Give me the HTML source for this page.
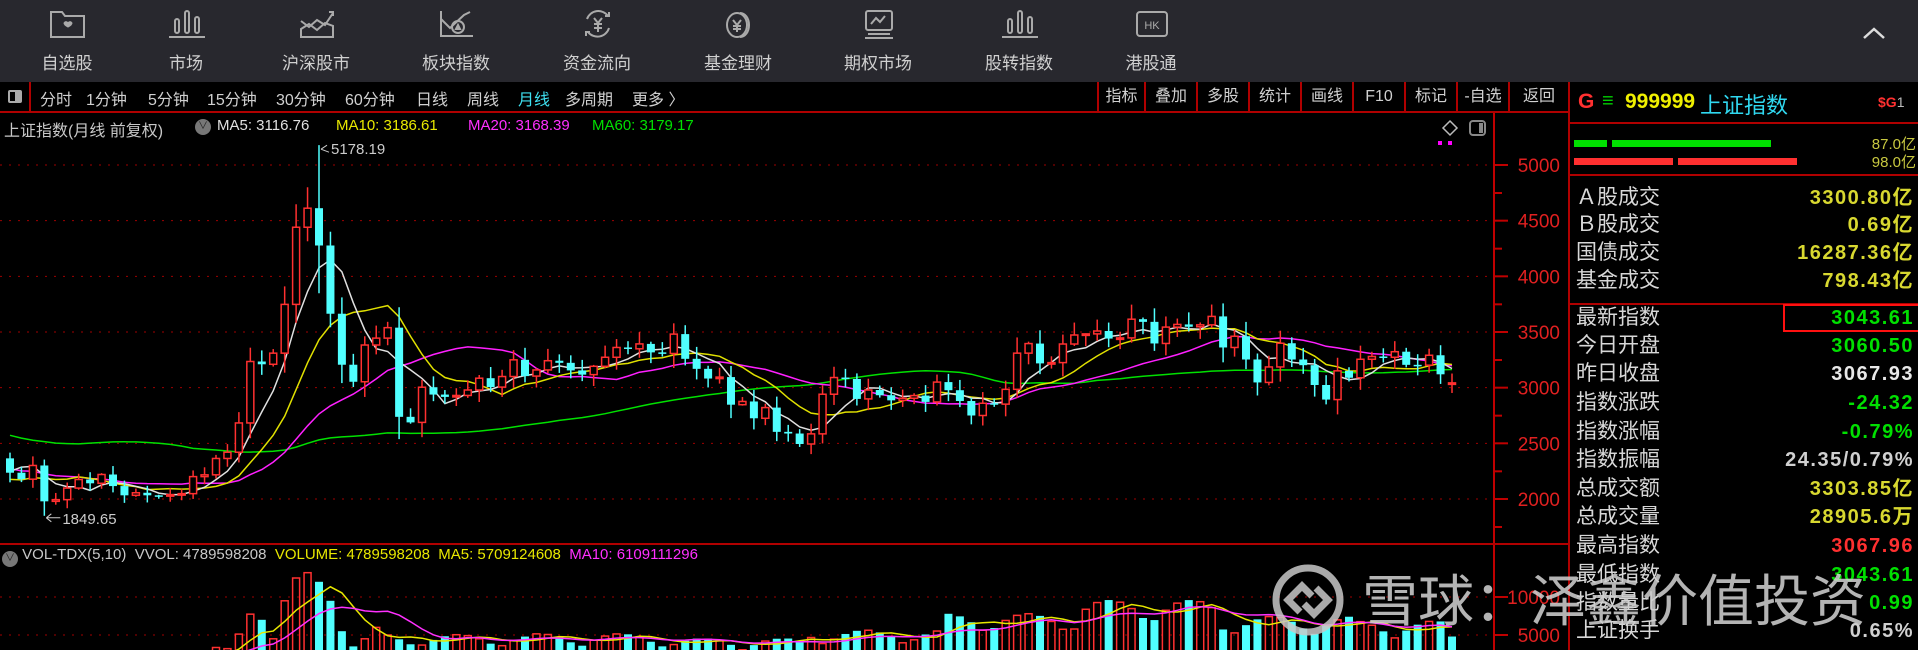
<!DOCTYPE html>
<html><head><meta charset="utf-8">
<style>
*{margin:0;padding:0;box-sizing:border-box}
body{width:1918px;height:650px;background:#000;overflow:hidden;position:relative;font-family:"Liberation Sans","Noto Sans CJK SC",sans-serif;color:#ccc}
#nav{position:absolute;left:0;top:0;width:1918px;height:82px;background:#28282e}
.ni{position:absolute;top:0;width:120px;text-align:center}
.ni svg{position:absolute;left:42px;top:9px}
.ni span{position:absolute;top:49px;left:0;width:120px;font-size:17px;color:#d0d0d0}
#tb{position:absolute;left:0;top:82px;width:1568px;height:31px;border-bottom:2px solid #b00000;background:#000}
.ti{position:absolute;top:4px;font-size:16px;color:#d0d0d0;white-space:nowrap}
.rb{position:absolute;top:0;height:29px;border-left:2px solid #b00000;font-size:16px;color:#d0d0d0;text-align:center;line-height:29px}
#rp{position:absolute;left:1568px;top:82px;width:350px;height:568px;border-left:2px solid #b00000}
.lb{position:absolute;left:6px;font-size:21px;color:#d8d8d8;white-space:nowrap;line-height:26px}
.vl{position:absolute;right:4px;font-size:20px;font-weight:bold;white-space:nowrap;line-height:26px;letter-spacing:1.5px}
.info{position:absolute;top:117px;font-size:15px;white-space:nowrap}
</style></head><body>
<div id="nav">
 <div class="ni" style="left:7px"><svg width="38" height="30" viewBox="0 0 38 30" fill="none" stroke="#aaa" stroke-width="2"><path d="M2 3h11l3 4h19v21H2z"/><path d="M15 14c2-3 4 0 4 0s2-3 4 0c0 2-4 4-4 4s-4-2-4-4z" fill="#aaa" stroke-width="1"/></svg><span>自选股</span></div>
 <div class="ni" style="left:126px"><svg width="38" height="30" viewBox="0 0 38 30" fill="none" stroke="#aaa" stroke-width="2"><rect x="7" y="10" width="4" height="14" rx="2"/><rect x="17" y="2" width="4" height="22" rx="2"/><rect x="27" y="8" width="4" height="16" rx="2"/><path d="M1 28h36"/></svg><span>市场</span></div>
 <div class="ni" style="left:256px"><svg width="38" height="30" viewBox="0 0 38 30" fill="none" stroke="#aaa" stroke-width="2"><path d="M3 12l8 6 8-7 8 5 8-12"/><path d="M31 3h4v4"/><path d="M3 20l8-5 8 6 8-7 8 3v11H3z"/></svg><span>沪深股市</span></div>
 <div class="ni" style="left:396px"><svg width="38" height="30" viewBox="0 0 38 30" fill="none" stroke="#aaa" stroke-width="2"><path d="M3 2v25h32"/><path d="M3 10l9 9 14-13 6-3"/><circle cx="20" cy="18" r="6"/><path d="M18 20l2-4 2 4z" fill="#aaa"/></svg><span>板块指数</span></div>
 <div class="ni" style="left:537px"><svg width="38" height="30" viewBox="0 0 38 30" fill="none" stroke="#aaa" stroke-width="2"><path d="M8 10a12 12 0 0 1 21-3"/><path d="M30 19a12 12 0 0 1-21 4"/><path d="M26 7h4V3M11 23H7v4"/><path d="M15 9l4 5 4-5M19 14v9M15 15h8M15 19h8"/></svg><span>资金流向</span></div>
 <div class="ni" style="left:678px"><svg width="38" height="30" viewBox="0 0 38 30" fill="none" stroke="#aaa" stroke-width="2"><ellipse cx="17" cy="16" rx="10" ry="12"/><path d="M20 4c5 0 9 5 9 12s-4 12-9 12"/><path d="M13 11l4 5 4-5M17 16v7M13 17h8M13 20h8"/></svg><span>基金理财</span></div>
 <div class="ni" style="left:818px"><svg width="38" height="30" viewBox="0 0 38 30" fill="none" stroke="#aaa" stroke-width="2"><rect x="6" y="2" width="26" height="19" rx="2"/><path d="M11 15l5-6 4 4 5-6"/><path d="M8 25h22M5 29h28"/></svg><span>期权市场</span></div>
 <div class="ni" style="left:959px"><svg width="38" height="30" viewBox="0 0 38 30" fill="none" stroke="#aaa" stroke-width="2"><rect x="7" y="10" width="4" height="14" rx="2"/><rect x="17" y="2" width="4" height="22" rx="2"/><rect x="27" y="8" width="4" height="16" rx="2"/><path d="M1 28h36"/></svg><span>股转指数</span></div>
 <div class="ni" style="left:1091px"><svg width="38" height="30" viewBox="0 0 38 30" fill="none" stroke="#aaa" stroke-width="2"><rect x="4" y="3" width="30" height="24" rx="3"/><text x="19" y="20" font-size="11" fill="#aaa" stroke="none" text-anchor="middle" font-family="Liberation Sans">HK</text></svg><span>港股通</span></div>
 <svg style="position:absolute;left:1862px;top:26px" width="24" height="14" viewBox="0 0 24 14"><path d="M2 12L12 3l10 9" fill="none" stroke="#ddd" stroke-width="2.5"/></svg>
</div>
<div id="tb">
 <div style="position:absolute;left:0;top:0;width:31px;height:29px;border-right:2px solid #b00000"><div style="position:absolute;left:8px;top:8px;width:14px;height:13px;border:2px solid #aaa;border-radius:2px"><div style="position:absolute;right:0;top:0;width:5px;height:9px;background:#aaa"></div></div></div>
 <span class="ti" style="left:40px">分时</span><span class="ti" style="left:86px">1分钟</span><span class="ti" style="left:148px">5分钟</span><span class="ti" style="left:207px">15分钟</span><span class="ti" style="left:276px">30分钟</span><span class="ti" style="left:345px">60分钟</span><span class="ti" style="left:416px">日线</span><span class="ti" style="left:467px">周线</span><span class="ti" style="left:518px;color:#3ee0f0">月线</span><span class="ti" style="left:565px">多周期</span><span class="ti" style="left:632px">更多 〉</span>
 <div class="rb" style="left:1097px;width:47px">指标</div><div class="rb" style="left:1144px;width:52px">叠加</div><div class="rb" style="left:1196px;width:52px">多股</div><div class="rb" style="left:1248px;width:52px">统计</div><div class="rb" style="left:1300px;width:52px">画线</div><div class="rb" style="left:1352px;width:52px">F10</div><div class="rb" style="left:1404px;width:52px">标记</div><div class="rb" style="left:1456px;width:52px">-自选</div><div class="rb" style="left:1508px;width:60px">返回</div>
</div>
<div class="info" style="left:4px;color:#c8c8c8;font-size:16px">上证指数(月线 前复权)</div>
<div style="position:absolute;left:195px;top:119px;width:16px;height:16px;border-radius:50%;background:#777;color:#222;font-size:10px;text-align:center;line-height:16px">∨</div>
<div class="info" style="left:217px;color:#e0e0e0">MA5: 3116.76</div>
<div class="info" style="left:336px;color:#e8e800">MA10: 3186.61</div>
<div class="info" style="left:468px;color:#ff30ff">MA20: 3168.39</div>
<div class="info" style="left:592px;color:#00e000">MA60: 3179.17</div>
<div class="info" style="left:2px;top:546px;color:#c8c8c8;font-size:15px"><span style="display:inline-block;width:16px;height:16px;border-radius:50%;background:#777;color:#222;font-size:10px;text-align:center;line-height:16px;vertical-align:-2px">∨</span> VOL-TDX(5,10) &nbsp;VVOL: 4789598208 &nbsp;<span style="color:#e8e800">VOLUME: 4789598208 &nbsp;MA5: 5709124608</span> &nbsp;<span style="color:#ff30ff">MA10: 6109111296</span></div>
<svg id="ch" style="position:absolute;left:0;top:0" width="1568" height="650"></svg>
<div id="rp">
 <div style="position:absolute;left:0;top:0;width:350px;height:42px;border-bottom:2px solid #b00000">
  <span style="position:absolute;left:8px;top:8px;font-size:21px;font-weight:bold;color:#ff3030">G</span>
  <span style="position:absolute;left:32px;top:8px;font-size:20px;color:#00d000">≡</span>
  <span style="position:absolute;left:55px;top:8px;font-size:21px;font-weight:bold;color:#f0f000">999999</span>
  <span style="position:absolute;left:130px;top:6px;font-size:22px;color:#30d8f0">上证指数</span>
  <span style="position:absolute;left:308px;top:12px;font-size:14px;font-weight:bold;color:#ff3030">$G<span style="color:#bbb;font-weight:normal">1</span></span>
 </div>
 <div style="position:absolute;left:4px;top:58px;width:33px;height:7px;background:#00e000"></div>
 <div style="position:absolute;left:42px;top:58px;width:159px;height:7px;background:#00e000"></div>
 <div style="position:absolute;left:4px;top:76px;width:99px;height:7px;background:#ff3030"></div>
 <div style="position:absolute;left:108px;top:76px;width:119px;height:7px;background:#ff3030"></div>
 <span style="position:absolute;right:2px;top:51px;font-size:15px;color:#c8c840">87.0亿</span>
 <span style="position:absolute;right:2px;top:69px;font-size:15px;color:#c8c840">98.0亿</span>
 <div style="position:absolute;left:0;top:92px;width:350px;height:2px;background:#b00000"></div>
 <div style="position:absolute;left:0;top:221px;width:350px;height:2px;background:#b00000"></div>
 <div style="position:absolute;left:213px;top:222px;width:137px;height:28px;border:2px solid #ff1010"></div>
 <div id="rows"></div>
</div>
<svg style="position:absolute;left:0;top:0" width="1918" height="650">
 <g fill="none" stroke="rgba(200,200,200,0.85)" stroke-width="7">
  <circle cx="1308" cy="600" r="32"/>
  <path d="M1300 612l-12-12 14-14 10 10"/>
  <path d="M1316 588l12 12-14 14-10-10"/>
 </g>
 <text x="1362" y="621" font-size="56" fill="rgba(205,205,205,0.88)" font-family="Noto Sans CJK SC,sans-serif">雪球：泽鑫价值投资</text>
</svg>
<script>
var pre=[3473,3693,3433,2736,2775,2397,2293,1728,1871,1821,1990,2082,2373,2477,2632,2959,3412,2667,2779,2995,3195,3277,2989,3051,3109,2870,2592,2398,2638,2638,2655,2978,2820,2808,2790,2905,2928,2911,2743,2762,2701,2567,2359,2468,2333,2199,2292,2428,2262,2396,2372,2225,2103,2047,2086,2068,1980,2269,2385,2365];
var d=[2236,2178,2301,1979,1994,2098,2175,2141,2220,2116,
2033,2056,2033,2026,2039,2048,2201,2217,2364,2420,2683,3235,
3210,3310,3748,4441,4612,4277,3664,3206,3053,3383,3445,3539,
2738,2688,3004,2938,2917,2930,2979,3085,3005,3100,3250,3104,
3159,3242,3223,3155,3117,3192,3273,3361,3349,3393,3317,3307,
3481,3259,3169,3082,3095,2847,2876,2725,2821,2603,2588,2494,
2585,2941,3091,3078,2899,2979,2932,2886,2905,2929,2872,3050,
2977,2880,2750,2860,2852,2985,3310,3396,3218,3225,3392,3473,
3483,3509,3441,3447,3615,3591,3397,3544,3568,3547,3564,3640,
3361,3462,3253,3047,3186,3399,3253,3202,3024,2893,3151,3089,
3255,3280,3273,3323,3205,3202,3291,3120,3043];
var all=pre.concat(d);var N=d.length;
function X(i){return 10+i*(1442/(N-1));}
function Y(p){return 165+(5000-p)*0.11133;}
function VY(v){return 673-v*38/5000;}
var s='',R='#ff3030',C='#50ffff';
[5000,4500,4000,3500,3000,2500,2000].forEach(function(p){var y=Y(p);s+='<line x1="0" y1="'+y+'" x2="1492" y2="'+y+'" stroke="#a00000" stroke-dasharray="2,7"/><line x1="1495" y1="'+y+'" x2="1508" y2="'+y+'" stroke="#c00000" stroke-width="2"/><text x="1560" y="'+(y+7)+'" fill="#e02020" font-size="19" text-anchor="end" font-family="Liberation Sans">'+p+'</text>';
 s+='<line x1="1495" y1="'+(y+28)+'" x2="1502" y2="'+(y+28)+'" stroke="#c00000" stroke-width="2"/>';});
[[10000,597],[5000,635]].forEach(function(a){s+='<line x1="0" y1="'+a[1]+'" x2="1492" y2="'+a[1]+'" stroke="#a00000" stroke-dasharray="2,7"/><line x1="1495" y1="'+a[1]+'" x2="1508" y2="'+a[1]+'" stroke="#c00000" stroke-width="2"/><text x="1560" y="'+(a[1]+7)+'" fill="#e02020" font-size="19" text-anchor="end" font-family="Liberation Sans">'+a[0]+'</text>';});
s+='<line x1="1494" y1="113" x2="1494" y2="650" stroke="#c00000" stroke-width="2"/><line x1="0" y1="544" x2="1568" y2="544" stroke="#b00000" stroke-width="2"/>';
var vol=[];
for(var i=0;i<N;i++){var v;
 var r=0.8+0.4*Math.abs(Math.sin(i*2.7));
 if(i<18)v=1800;else if(i<20)v=2800;else if(i<21)v=5000;else if(i<22)v=9000;
 else if(i<34)v=[7000,4500,9500,12500,13200,12000,9500,5500,3500,4500,6000,5000][i-22]*1.0;
 else if(i<46)v=4200;else if(i<58)v=4300;else if(i<70)v=3800;else if(i<82)v=4700;else if(i<94)v=6500;else if(i<106)v=8000;else if(i<118)v=6200;else v=5700;
 if(i>=22&&i<34)r=1;vol.push(v*r);}
vol[N-1]=4800;
var vs='';
for(var i=0;i<N;i++){var c=d[i],o=all[59+i];var x=X(i),y=VY(vol[i]);if(c>=o)vs+='<rect x="'+(x-3.5)+'" y="'+y+'" width="7" height="'+(673-y)+'" fill="none" stroke="'+R+'" stroke-width="1.5"/>';else vs+='<rect x="'+(x-4)+'" y="'+y+'" width="8" height="'+(673-y)+'" fill="'+C+'"/>';}
function vma(n){var p='';for(var i=0;i<N;i++){var a=0,k=0;for(var j=Math.max(0,i-n+1);j<=i;j++){a+=vol[j];k++;}p+=(i?'L':'M')+X(i).toFixed(1)+' '+VY(a/k).toFixed(1);}return p;}
vs+='<path d="'+vma(5)+'" fill="none" stroke="#e8e800" stroke-width="1.5"/><path d="'+vma(10)+'" fill="none" stroke="#ff30ff" stroke-width="1.5"/>';
s+='<clipPath id="vc"><rect x="0" y="562" width="1492" height="90"/></clipPath><g clip-path="url(#vc)">'+vs+'</g>';
function ma(n,col){var p='';for(var i=0;i<N;i++){var a=0;for(var j=0;j<n;j++)a+=all[60+i-j];p+=(i?'L':'M')+X(i).toFixed(1)+' '+Y(a/n).toFixed(1);}return '<path d="'+p+'" fill="none" stroke="'+col+'" stroke-width="1.5"/>';}
var cs=ma(60,'#00e000')+ma(20,'#ff20ff')+ma(10,'#e0e000')+ma(5,'#e0e0e0');
for(var i=0;i<N;i++){var c=d[i],o=all[59+i];if(i==N-1)o=3036;
 var r=Math.abs(Math.sin(i*1.9+0.5));var hi=Math.max(o,c)+Math.abs(c-o)*0.15+c*0.03*r,lo=Math.min(o,c)-Math.abs(c-o)*0.15-c*0.03*Math.abs(Math.cos(i*1.3));
 if(i==27){hi=5178;lo=3848;} if(i==3){lo=1849;} if(i==26)hi=4800;
 var x=X(i);var col=c>=o?R:C;
 cs+='<line x1="'+x+'" y1="'+Y(hi)+'" x2="'+x+'" y2="'+Y(lo)+'" stroke="'+col+'" stroke-width="1.5"/>';
 var t=Y(Math.max(o,c)),b=Y(Math.min(o,c));if(b-t<1.5)b=t+1.5;
 if(c>=o)cs+='<rect x="'+(x-3.5)+'" y="'+t+'" width="7" height="'+(b-t)+'" fill="#000" stroke="'+R+'" stroke-width="1.5"/>';
 else cs+='<rect x="'+(x-4)+'" y="'+t+'" width="8" height="'+(b-t)+'" fill="'+C+'"/>';}
s+='<clipPath id="mc"><rect x="0" y="140" width="1492" height="402"/></clipPath><g clip-path="url(#mc)">'+cs+'</g>';
var px=X(27),lx=X(3);
s+='<path d="M'+(px+2)+' '+(Y(5178)+4)+'l6 -4M'+(px+2)+' '+(Y(5178)+4)+'l8 3" stroke="#ccc" fill="none"/><text x="'+(px+12)+'" y="'+(Y(5178)+9)+'" fill="#ccc" font-size="15" font-family="Liberation Sans">5178.19</text>';
s+='<path d="M'+(lx+2)+' '+(Y(1849)+2)+'l5 -4M'+(lx+2)+' '+(Y(1849)+2)+'l5 4M'+(lx+2)+' '+(Y(1849)+2)+'h14" stroke="#ccc" fill="none"/><text x="'+(lx+18)+'" y="'+(Y(1849)+8)+'" fill="#ccc" font-size="15" font-family="Liberation Sans">1849.65</text>';
s+='<path d="M1450 121l7 7-7 7-7-7z" fill="none" stroke="#bbb" stroke-width="1.5"/><rect x="1470" y="121" width="15" height="14" rx="3" fill="none" stroke="#888" stroke-width="2"/><rect x="1479" y="123" width="4" height="10" fill="#888"/><rect x="1438" y="141" width="4" height="4" fill="#f0f"/><rect x="1448" y="141" width="4" height="4" fill="#f0f"/>';
document.getElementById('ch').innerHTML=s;
var rows=[['Ａ股成交','3300.80亿','#d8d830',116],['Ｂ股成交','0.69亿','#d8d830',143],['国债成交','16287.36亿','#d8d830',171],['基金成交','798.43亿','#d8d830',199],
['最新指数','3043.61','#00e000',236],['今日开盘','3060.50','#00e000',264],['昨日收盘','3067.93','#e8e8e8',292],['指数涨跌','-24.32','#00e000',321],['指数涨幅','-0.79%','#00e000',350],['指数振幅','24.35/0.79%','#d0d0d0',378],['总成交额','3303.85亿','#d8d830',407],['总成交量','28905.6万','#d8d830',435],['最高指数','3067.96','#ff3030',464],['最低指数','3043.61','#00e000',493],['指数量比','0.99','#00e000',521],['上证换手','0.65%','#d0d0d0',549]];
var h='';rows.forEach(function(r){h+='<div class="lb" style="top:'+(r[3]-13)+'px">'+r[0]+'</div><div class="vl" style="top:'+(r[3]-13)+'px;color:'+r[2]+'">'+r[1]+'</div>';});
document.getElementById('rows').innerHTML=h;
</script>
</body></html>
